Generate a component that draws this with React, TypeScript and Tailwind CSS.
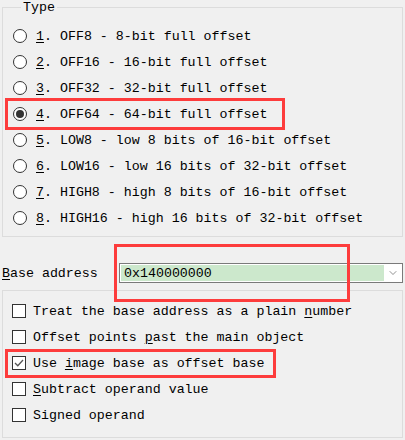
import React from 'react';
import { ChevronDown } from 'lucide-react';

const options = [
  { key: '1', text: 'OFF8 - 8-bit full offset' },
  { key: '2', text: 'OFF16 - 16-bit full offset' },
  { key: '3', text: 'OFF32 - 32-bit full offset' },
  { key: '4', text: 'OFF64 - 64-bit full offset' },
  { key: '5', text: 'LOW8 - low 8 bits of 16-bit offset' },
  { key: '6', text: 'LOW16 - low 16 bits of 32-bit offset' },
  { key: '7', text: 'HIGH8 - high 8 bits of 16-bit offset' },
  { key: '8', text: 'HIGH16 - high 16 bits of 32-bit offset' },
];

const flags = [
  { pre: 'Treat the base address as a plain ', hot: 'n', post: 'umber', checked: false },
  { pre: 'Offset points ', hot: 'p', post: 'ast the main object', checked: false },
  { pre: 'Use ', hot: 'i', post: 'mage base as offset base', checked: true },
  { pre: '', hot: 'S', post: 'ubtract operand value', checked: false },
  { pre: 'Signed operand', hot: '', post: '', checked: false },
];

const Radio = ({ on }: { on: boolean }) => (
  <span className="flex items-center justify-center w-[14px] h-[14px] rounded-full border border-[#333] bg-white shrink-0">
    {on && <span className="w-[8px] h-[8px] rounded-full bg-[#333]" />}
  </span>
);

const Check = ({ on }: { on: boolean }) => (
  <span className="flex items-center justify-center w-[14px] h-[14px] border border-[#333] bg-white shrink-0">
    {on && (
      <svg width="12" height="12" viewBox="0 0 12 12">
        <path d="M2 6 L4.8 8.8 L10 3" fill="none" stroke="#555" strokeWidth="1.3" />
      </svg>
    )}
  </span>
);

export default function App() {
  return (
    <div className="relative w-[405px] h-[440px] bg-[#f0f0f0] text-black text-[13.3px] leading-[15px] font-['Liberation_Mono',monospace] overflow-hidden">
      <fieldset className="ml-[2px] w-[401px] h-[237px] border border-[#dcdcdc] pl-[10px] pt-[8px]">
        <legend className="ml-[8px] px-[2px] leading-[15px]">Type</legend>
        {options.map((o) => (
          <div key={o.key} className="flex items-center h-[26px] gap-[9px]">
            <Radio on={o.key === '4'} />
            <span className="whitespace-pre">
              <span className="underline underline-offset-2">{o.key}</span>. {o.text}
            </span>
          </div>
        ))}
      </fieldset>

      <div className="flex items-center mt-[26px] pl-[2px] h-[20px]">
        <span className="w-[117px] whitespace-pre">
          <span className="underline underline-offset-2">B</span>ase address
        </span>
        <div className="flex items-center w-[284px] h-[20px] border border-[#7a7a7a] bg-white pl-[1px]">
          <div className="flex items-center flex-1 h-[16px] bg-[#cce8cc] pl-[3px]">0x140000000</div>
          <div className="flex items-center justify-center w-[18px]">
            <ChevronDown size={12} strokeWidth={1.3} color="#555" />
          </div>
        </div>
      </div>

      <div className="ml-[2px] mt-[7px] w-[401px] h-[148px] border border-[#dcdcdc] pl-[9px] pt-[7px]">
        {flags.map((f, i) => (
          <div key={i} className="flex items-center h-[26px] gap-[7px]">
            <Check on={f.checked} />
            <span className="whitespace-pre">
              {f.pre}
              {f.hot && <span className="underline underline-offset-2">{f.hot}</span>}
              {f.post}
            </span>
          </div>
        ))}
      </div>

      <div className="absolute left-[5px] top-[98px] w-[280px] h-[32px] border-[3px] border-[#fd3c3c]" />
      <div className="absolute left-[114px] top-[244px] w-[236px] h-[58px] border-[3px] border-[#fd3c3c]" />
      <div className="absolute left-[5px] top-[349px] w-[271px] h-[29px] border-[3px] border-[#fd3c3c]" />
    </div>
  );
}
